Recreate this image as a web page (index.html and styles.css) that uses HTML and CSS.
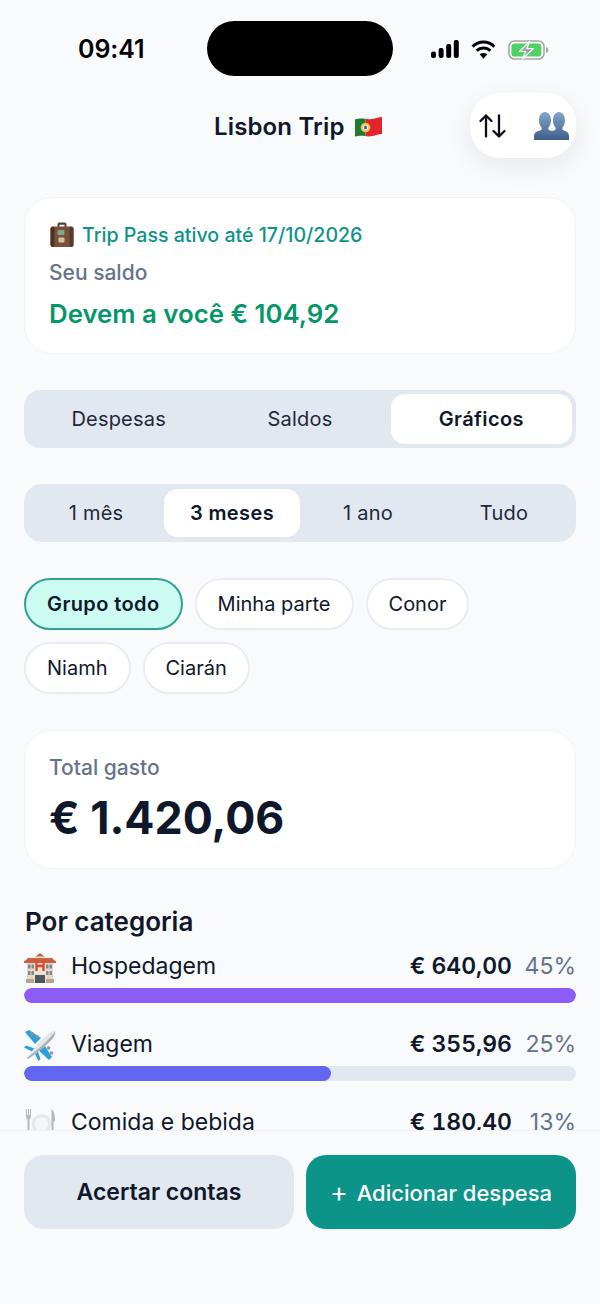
FILE: index.html
```html
<!DOCTYPE html>
<html lang="pt-BR">
<head>
<meta charset="UTF-8" />
<meta name="viewport" content="width=device-width, initial-scale=1" />
<title>Lisbon Trip</title>
<link rel="stylesheet" href="styles.css">
</head>
<body>

<div class="screen">

  <div class="status-bar">
    <span class="clock">09:41</span>
    <div class="island"></div>
    <div class="status-icons">
      <svg width="28" height="18" viewBox="0 0 28 18"><g fill="#000"><rect x="0" y="11.500" width="5" height="6.500" rx="2"/><rect x="7.600" y="8" width="5" height="10" rx="2"/><rect x="15.200" y="4" width="5" height="14" rx="2"/><rect x="22.800" y="0" width="5" height="18" rx="2"/></g></svg>
      <svg width="25" height="19" viewBox="0 0 25 19"><g fill="none" stroke="#000" stroke-width="3"><path d="M1.600 6.600C8 .6 17 .6 23.400 6.600"/><path d="M5.600 10.700c4-3.600 9.800-3.600 13.800 0"/></g><path d="M12.500 18.800 8.700 14.300c2.300-1.800 5.300-1.800 7.600 0z" fill="#000"/></svg>
      <svg width="41" height="20" viewBox="0 0 41 20"><rect x="1" y="1" width="35" height="18" rx="5.500" fill="#fff" stroke="#a3a8a6" stroke-width="1.600"/><rect x="3.400" y="3.400" width="30" height="13.200" rx="3.200" fill="#4fd164"/><path d="M38 7v6c1.500-.5 2.400-1.600 2.400-3S39.500 7.500 38 7z" fill="#a3a8a6"/><path d="M21.500 1.500 11.500 11.500h6l-3 7.500 11-10.500h-6.500z" fill="#a3a8a6" stroke="#fff" stroke-width="1.200" stroke-linejoin="round"/></svg>
    </div>
  </div>

  <header class="top-bar">
    <h1 class="trip-title">Lisbon Trip
      <svg class="flag" width="29" height="22" viewBox="0 0 29 22"><defs><clipPath id="flagclip"><path d="M1 3.500C7 1 12 4 18 3c4-.7 7-1.700 10-2v17c-4 .3-7 1.500-11 2.300-5 .8-9-1.800-16 .2z"/></clipPath></defs><g clip-path="url(#flagclip)"><rect width="11.500" height="22" fill="#1f7a34"/><rect x="11.500" width="18" height="22" fill="#e3242b"/></g><circle cx="11.500" cy="11.500" r="4.800" fill="#f2c230"/><circle cx="11.500" cy="11.500" r="3" fill="#e8e4dc"/><rect x="10.200" y="9.700" width="2.600" height="3.600" rx="1" fill="#3a5ca8"/></svg>
    </h1>
    <div class="top-actions">
      <svg width="27" height="24" viewBox="0 0 27 24"><g fill="none" stroke="#0b0f17" stroke-width="2.300" stroke-linecap="round" stroke-linejoin="round"><path d="M7 22.500V1.500M1.500 7 7 1.500 12.500 7"/><path d="M20 1.500v21M14.500 17l5.500 5.500 5.500-5.500"/></g></svg>
      <svg width="35" height="28" viewBox="0 0 35 28"><defs><linearGradient id="bust" x1="0" y1="0" x2="0" y2="1"><stop offset="0" stop-color="#86a6c8"/><stop offset="1" stop-color="#3c5f8c"/></linearGradient></defs><g fill="url(#bust)"><path d="M0 28v-4c0-3 2-4.500 6-5.500 1.500-.5 2-1.500 1.500-3-1.500-1.800-2.500-4-2.500-7C5 3.500 7.500 0 11 0s6 3.500 6 8.500c0 3-1 5.200-2.500 7-.5 1.500 0 2.500 1.500 3l2 .600 2-.600c1.500-.5 2-1.500 1.500-3-1.500-1.800-2.500-4-2.500-7C19 3.500 21.500 0 25 0s6 3.500 6 8.500c0 3-1 5.200-2.500 7-.5 1.500 0 2.500 1.500 3 3 1 5 2.500 5 5.500v4z"/></g></svg>
    </div>
  </header>

  <main class="content">

    <section class="card pass-card">
      <p class="pass-line">
        <svg class="pass-icon" width="24" height="26" viewBox="0 0 24 26"><path d="M7.500 5V2.500C7.500 1 8.500.5 10 .5h4c1.500 0 2.500.5 2.500 2V5h-2V2.800h-5V5z" fill="#5a4030"/><rect x="0.500" y="4.500" width="23" height="20.500" rx="3" fill="#7a5038"/><rect x="0.500" y="4.500" width="4" height="20.500" rx="2" fill="#4f3324"/><rect x="19.500" y="4.500" width="4" height="20.500" rx="2" fill="#573a2a"/><rect x="7.500" y="8" width="7" height="5" rx="1" fill="#7fa595"/><rect x="8.500" y="15.500" width="6" height="5" rx="1" fill="#c9c3ab"/></svg>
        Trip Pass ativo até 17/10/2026
      </p>
      <p class="muted-label">Seu saldo</p>
      <p class="balance">Devem a você € 104,92</p>
    </section>

    <nav class="segments tabs">
      <span class="segment">Despesas</span>
      <span class="segment">Saldos</span>
      <span class="segment active">Gráficos</span>
    </nav>

    <div class="segments ranges">
      <span class="segment">1 mês</span>
      <span class="segment active">3 meses</span>
      <span class="segment">1 ano</span>
      <span class="segment">Tudo</span>
    </div>

    <div class="chips">
      <span class="chip active">Grupo todo</span>
      <span class="chip">Minha parte</span>
      <span class="chip">Conor</span>
      <span class="chip">Niamh</span>
      <span class="chip">Ciarán</span>
    </div>

    <section class="card total-card">
      <p class="muted-label">Total gasto</p>
      <p class="total">€ 1.420,06</p>
    </section>

    <section class="categories">
      <h2 class="section-title">Por categoria</h2>

      <div class="category">
        <div class="category-head">
          <svg class="category-icon" width="32" height="31" viewBox="0 0 32 31"><path d="M11 5 16 1l5 4z" fill="#c9603f"/><rect x="3" y="8" width="26" height="23" fill="#e9d8c3"/><rect x="10" y="4.500" width="12" height="26.500" fill="#f1e4d2"/><path d="M0 9.500 4 6h24l4 3.500v1.500H0z" fill="#c9603f"/><path d="M12.500 9v10M19.500 9v10M12.500 14h7" stroke="#e0442e" stroke-width="2.400" fill="none"/><g fill="#7d8a92"><rect x="4" y="12.500" width="2.500" height="4"/><rect x="7.500" y="12.500" width="2.500" height="4"/><rect x="22" y="12.500" width="2.500" height="4"/><rect x="25.500" y="12.500" width="2.500" height="4"/><rect x="4" y="19" width="2.500" height="4"/><rect x="7.500" y="19" width="2.500" height="4"/><rect x="22" y="19" width="2.500" height="4"/><rect x="25.500" y="19" width="2.500" height="4"/></g><rect x="11" y="23" width="10" height="8" fill="#4c5660"/><rect x="2" y="27" width="8" height="4" fill="#b7a68f"/><rect x="22" y="27" width="8" height="4" fill="#b7a68f"/></svg>
          <span class="category-name">Hospedagem</span>
          <span class="category-amount">€ 640,00</span>
          <span class="category-share">45%</span>
        </div>
        <div class="bar"><div class="bar-fill purple" style="width:100%"></div></div>
      </div>

      <div class="category">
        <div class="category-head">
          <svg class="category-icon" width="32" height="31" viewBox="0 0 32 31"><path d="M1 2 5 0l12 8-6 6z" fill="#2f9fdc"/><path d="M13 19l6-6 9 14-3 3z" fill="#2f9fdc"/><path d="M9 22 0 17.500l2-2L12 19z" fill="#2f9fdc"/><path d="M10 22l4.500 9 2-2L13 19z" fill="#2f9fdc"/><g fill="#8c949c"><circle cx="8" cy="3.500" r="1.800"/><circle cx="13" cy="6.500" r="1.800"/><circle cx="27.500" cy="23" r="1.800"/><circle cx="24.500" cy="18" r="1.800"/></g><path d="M3 28C9 19 17 10 25 3c2.500-2 5.500-3 6.500-2s0 4-2 6.500C22.500 15.500 13 23 4 29z" fill="#e3e6e9"/><path d="M3 28C12 21 22 13 31 2c0 2-.5 3.500-1.500 5.500C22.500 15.500 13 23 4 29z" fill="#a8aeb4"/></svg>
          <span class="category-name">Viagem</span>
          <span class="category-amount">€ 355,96</span>
          <span class="category-share">25%</span>
        </div>
        <div class="bar"><div class="bar-fill indigo" style="width:55.6%"></div></div>
      </div>

      <div class="category">
        <div class="category-head">
          <svg class="category-icon" width="32" height="31" viewBox="0 0 32 31"><circle cx="17.500" cy="16" r="10" fill="#e6e8ea"/><circle cx="17.500" cy="16" r="6.800" fill="#f4f5f6"/><path d="M2 1v7c0 2 1 3 1.500 3.500V30h2V11.500C6 11 7 10 7 8V1H6v6H5V1H4v6H3V1z" fill="#b4b9bf"/><path d="M27.500 1c2.500 1 3.500 6 3.500 12l-1.500 1v16h-2z" fill="#b4b9bf"/></svg>
          <span class="category-name">Comida e bebida</span>
          <span class="category-amount">€ 180,40</span>
          <span class="category-share">13%</span>
        </div>
      </div>
    </section>

  </main>

  <footer class="actions">
    <button class="action-btn secondary">Acertar contas</button>
    <button class="action-btn primary"><span class="plus">+</span> Adicionar despesa</button>
  </footer>

</div>

</body>
</html>
```

FILE: styles.css
```css
* {
  box-sizing: border-box;
}
body {
  margin: 0;
  background: #f9fafc;
  color: #0f172a;
  font-family: Inter, "Noto Sans", sans-serif;
}
p, h1, h2 {
  margin: 0;
}
.screen {
  height: 1304px;
  display: flex;
  flex-direction: column;
  overflow: hidden;
}

/* status bar */
.status-bar {
  display: grid;
  grid-template-columns: 207px 186px 207px;
  height: 76px;
  padding-top: 21px;
}
.clock {
  padding-left: 78px;
  padding-top: 13px;
  font-size: 25px;
  line-height: 30px;
  font-weight: 600;
  letter-spacing: -0.1px;
  color: #000;
}
.island {
  background: #000;
  border-radius: 28px;
}
.status-icons {
  display: flex;
  align-items: flex-start;
  gap: 12px;
  padding-top: 19px;
  padding-left: 38px;
}

/* header */
.top-bar {
  display: flex;
  align-items: center;
  justify-content: space-between;
  height: 65px;
  margin-top: 17px;
  padding: 0 24px 0 214px;
}
.trip-title {
  display: flex;
  align-items: center;
  gap: 9px;
  margin-top: 2px;
  font-size: 24px;
  font-weight: 600;
  letter-spacing: 0.15px;
}
.top-actions {
  display: flex;
  align-items: center;
  gap: 28px;
  width: 106px;
  height: 65px;
  padding-left: 9px;
  background: #fff;
  border-radius: 30px;
  box-shadow: 0 8px 26px rgba(15, 23, 42, 0.08);
}

/* main column */
.content {
  flex: 1;
  min-height: 0;
  overflow: hidden;
  display: flex;
  flex-direction: column;
  gap: 36px;
  padding: 39px 24px 0;
}
.card {
  flex: none;
  background: #fff;
  border: 1px solid #f0f3f7;
  border-radius: 28px;
  padding: 0 24px;
}
.pass-card {
  height: 157px;
  padding-top: 24px;
}
.pass-line {
  display: flex;
  align-items: center;
  gap: 8px;
  font-size: 19.6px;
  line-height: 26px;
  font-weight: 500;
  color: #0d9488;
}
.pass-icon {
  margin-left: 1px;
}
.muted-label {
  font-size: 21px;
  line-height: 26px;
  font-weight: 500;
  color: #64748b;
}
.pass-line + .muted-label {
  margin-top: 12px;
}
.balance {
  margin-top: 11px;
  font-size: 25.8px;
  line-height: 34px;
  font-weight: 600;
  color: #059669;
}
.total-card {
  height: 139px;
  padding-top: 24px;
}
.total {
  margin-top: 7px;
  font-size: 44.7px;
  line-height: 60px;
  font-weight: 700;
}

/* segmented controls */
.segments {
  flex: none;
  display: grid;
  height: 58px;
  padding: 4px;
  background: #e2e8f0;
}
.tabs {
  grid-template-columns: repeat(3, 1fr);
  border-radius: 16px;
}
.ranges {
  grid-template-columns: repeat(4, 1fr);
  padding: 5px 4px;
  border-radius: 18px;
}
.segment {
  display: flex;
  align-items: center;
  justify-content: center;
  font-size: 20px;
  letter-spacing: 0.2px;
  color: #1e293b;
  border-radius: 14px;
}
.segment.active {
  background: #fff;
  color: #0f172a;
  font-weight: 600;
  letter-spacing: 0.4px;
}

/* filter chips */
.chips {
  flex: none;
  display: flex;
  flex-wrap: wrap;
  gap: 12px;
}
.chip {
  height: 52px;
  padding: 0 21px;
  display: flex;
  align-items: center;
  background: #fff;
  border: 2px solid #e9edf3;
  border-radius: 26px;
  font-size: 20px;
  color: #0f172a;
}
.chip.active {
  background: #ccfbf1;
  border-color: #33a094;
  font-weight: 600;
  letter-spacing: 0.4px;
}

/* categories */
.categories {
  flex: none;
  display: flex;
  flex-direction: column;
  gap: 27px;
}
.section-title {
  height: 34px;
  margin-bottom: -14px;
  padding-left: 1px;
  font-size: 26px;
  line-height: 34px;
  font-weight: 600;
}
.category-head {
  display: flex;
  align-items: center;
  height: 30px;
  font-size: 23px;
}
.category-icon {
  flex: none;
  margin-right: 15px;
}
.category-name {
  flex: 1;
  margin-bottom: 2px;
}
.category-amount {
  margin-bottom: 2px;
  font-weight: 600;
  font-variant-numeric: tabular-nums;
}
.category-share {
  width: 64px;
  margin-bottom: 2px;
  text-align: right;
  color: #64748b;
}
.bar {
  height: 15px;
  margin-top: 6px;
  background: #e2e8f0;
  border-radius: 8px;
  overflow: hidden;
}
.bar-fill {
  height: 100%;
  border-radius: 8px;
}
.purple {
  background: #8b5cf6;
}
.indigo {
  background: #6366f1;
}

/* bottom actions */
.actions {
  flex: none;
  display: flex;
  gap: 12px;
  padding: 24px 24px 75px;
  background: #f9fafc;
  border-top: 1px solid #eef1f5;
}
.action-btn {
  flex: 1;
  height: 74px;
  border: none;
  border-radius: 20px;
  font-family: inherit;
  font-size: 22px;
}
.secondary {
  background: #e2e8f0;
  color: #0f172a;
  font-size: 23px;
  font-weight: 600;
}
.primary {
  background: #0d9488;
  color: #fff;
  font-weight: 500;
}
.plus {
  margin-right: 3px;
  font-size: 27px;
  line-height: 1;
  font-weight: 400;
  vertical-align: -1px;
}
```
